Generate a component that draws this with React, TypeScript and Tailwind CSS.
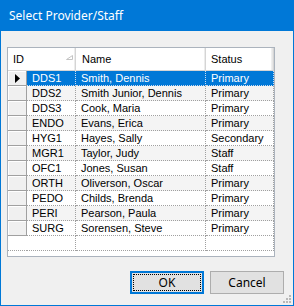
import React from "react";

const rows = [
  ["DDS1", "Smith, Dennis", "Primary"],
  ["DDS2", "Smith Junior, Dennis", "Primary"],
  ["DDS3", "Cook, Maria", "Primary"],
  ["ENDO", "Evans, Erica", "Primary"],
  ["HYG1", "Hayes, Sally", "Secondary"],
  ["MGR1", "Taylor, Judy", "Staff"],
  ["OFC1", "Jones, Susan", "Staff"],
  ["ORTH", "Oliverson, Oscar", "Primary"],
  ["PEDO", "Childs, Brenda", "Primary"],
  ["PERI", "Pearson, Paula", "Primary"],
  ["SURG", "Sorensen, Steve", "Primary"],
];

const uiFont = { fontFamily: '"Segoe UI", "Noto Sans", sans-serif' };
const gridFont = { fontFamily: '"Liberation Sans", Arial, sans-serif' };

export default function App() {
  return (
    <div
      className="w-[294px] h-[306px] bg-[#f0f0f0] border-x border-b border-[#0078d7] flex flex-col relative overflow-hidden"
      style={uiFont}
    >
      <div className="h-[31px] shrink-0 bg-[#0078d7] pl-[8px] flex items-center text-white text-[12px]">
        Select Provider/Staff
      </div>

      <div
        className="mt-[16px] ml-[6px] w-[268px] h-[210px] border border-[#abb3bd] bg-white flex flex-col text-[11px] text-black"
        style={gridFont}
      >
        {/* header */}
        <div className="flex h-[23px] shrink-0">
          <div className="w-[68px] h-full bg-white shadow-[inset_-1px_-1px_0_#d5d5d5,inset_-2px_0_0_#ececec] pl-[5px] flex items-center relative">
            ID
            <svg
              className="absolute left-[58px] top-[7px]"
              width="7"
              height="5"
              viewBox="0 0 7 5"
            >
              <path d="M0.5 4.5 L6.5 4.5 L6.5 0.5 Z" fill="none" stroke="#c4c4c4" strokeWidth="1" />
            </svg>
          </div>
          <div className="w-[130px] h-full bg-white shadow-[inset_-1px_-1px_0_#d5d5d5,inset_-2px_0_0_#ececec] pl-[6px] flex items-center">
            Name
          </div>
          <div className="w-[68px] h-full bg-white shadow-[inset_-1px_-1px_0_#d5d5d5,inset_-2px_0_0_#e6e6e6,inset_-3px_0_0_#efefef] pl-[5px] flex items-center">
            Status
          </div>
        </div>

        {rows.map((r, i) => {
          const sel = i === 0;
          const alt = i % 2 === 1;
          const cellBg = sel ? "bg-[#0078d7] text-white" : alt ? "bg-[#f4f4f4]" : "bg-white";
          const bcol = sel ? "border-[#c9dcf0]" : "border-[#a0a0a0]";
          return (
            <div key={r[0]} className="flex h-[15px] shrink-0">
              <div className="w-[19px] h-full bg-[#f0f0f0] shadow-[inset_-1px_-1px_0_#a0a0a0,inset_1px_1px_0_#ffffff] flex items-center justify-center">
                {sel && (
                  <svg width="5" height="9" viewBox="0 0 5 9">
                    <path d="M0 0 L5 4.5 L0 9 Z" fill="#000" />
                  </svg>
                )}
              </div>
              <div className={`w-[49px] h-full border-r border-b border-dotted ${bcol} ${cellBg} pl-[5px] flex items-center leading-none whitespace-nowrap`}>
                {r[0]}
              </div>
              <div className={`w-[130px] h-full border-r border-b border-dotted ${bcol} ${cellBg} pl-[5px] flex items-center leading-none whitespace-nowrap`}>
                {r[1]}
              </div>
              <div className={`w-[68px] h-full border-r border-b border-dotted ${bcol} ${cellBg} pl-[5px] flex items-center leading-none whitespace-nowrap`}>
                {r[2]}
              </div>
            </div>
          );
        })}

        {/* new row */}
        <div className="flex h-[15px] shrink-0">
          <div className="w-[19px] h-full border-b border-dotted border-[#a0a0a0]" />
          <div className="w-[49px] h-full border-r border-b border-dotted border-[#a0a0a0]" />
          <div className="w-[130px] h-full border-r border-b border-dotted border-[#a0a0a0]" />
          <div className="w-[68px] h-full border-r border-b border-dotted border-[#a0a0a0]" />
        </div>
      </div>

      <div className="mt-[14px] flex justify-end gap-[6px] pr-[9px] text-[12px] text-black">
        <div className="w-[74px] h-[23px] border-2 border-[#0078d7] bg-[#e1e1e1] p-[1px]">
          <div className="w-full h-full border border-dotted border-black flex items-center justify-center">
            OK
          </div>
        </div>
        <div className="w-[74px] h-[23px] border border-[#adadad] bg-[#e1e1e1] flex items-center justify-center">
          Cancel
        </div>
      </div>

      {/* size grip */}
      <svg className="absolute right-[1px] bottom-[1px]" width="10" height="10" viewBox="0 0 10 10">
        <rect x="7" y="1" width="2" height="2" fill="#b8b8b8" />
        <rect x="4" y="4" width="2" height="2" fill="#b8b8b8" />
        <rect x="7" y="4" width="2" height="2" fill="#b8b8b8" />
        <rect x="1" y="7" width="2" height="2" fill="#b8b8b8" />
        <rect x="4" y="7" width="2" height="2" fill="#b8b8b8" />
        <rect x="7" y="7" width="2" height="2" fill="#b8b8b8" />
      </svg>
    </div>
  );
}
